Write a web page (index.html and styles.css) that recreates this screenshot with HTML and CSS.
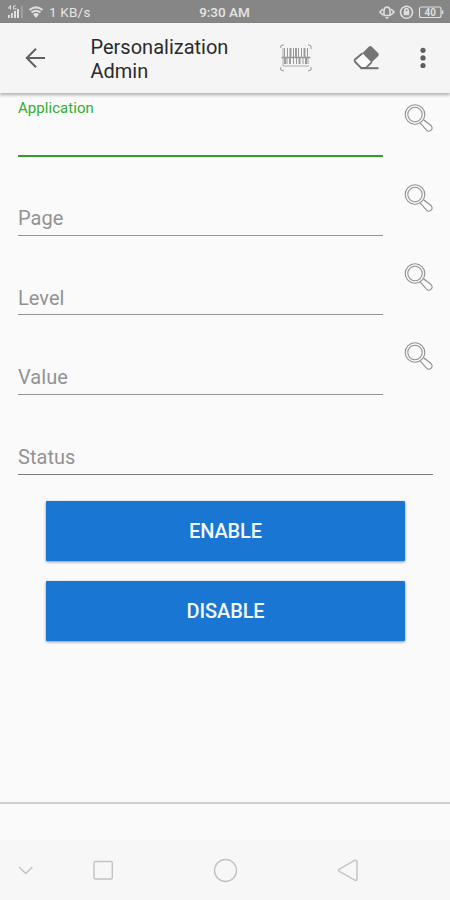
FILE: index.html
```html
<!DOCTYPE html>
<html lang="en">
<head>
<meta charset="utf-8">
<title>Personalization Admin</title>
<link rel="stylesheet" href="styles.css">
</head>
<body>
<svg class="defs" width="0" height="0" aria-hidden="true">
  <symbol id="search" viewBox="0 0 30 30">
    <g fill="none" stroke="#909090" stroke-width="1.100">
      <circle cx="12" cy="11.500" r="9.800"/>
      <circle cx="12" cy="11.500" r="7.200"/>
      <path d="M17.300 20.200L23.500 27.200C26.500 30 30.500 26.300 28.500 23.200C27 21.200 24 19.500 20.500 16.700"/>
    </g>
  </symbol>
</svg>
<div class="screen">
  <div class="status-bar">
    <div class="status-left">
      <svg width="38" height="16" viewBox="0 0 38 16">
        <g fill="#e2e2e2">
          <path d="M1.500 3.500l2-2v4M.8 4h3.500M9 2H6.500v3h2.500V3.800" fill="none" stroke="#d8d8d8"/>
          <rect x="1" y="11" width="1.800" height="3"/>
          <rect x="4" y="9" width="1.800" height="5"/>
          <rect x="7" y="7" width="2" height="7"/>
          <rect x="10" y="5" width="2" height="9"/>
          <rect x="14.500" y="2" width="1" height="12" opacity=".6"/>
        </g>
        <g fill="none" stroke="#dcdcdc" stroke-width="2">
          <path d="M22.500 6Q29 0.700 35.500 6M24.500 8.500Q29 5 33.500 8.500"/>
          <path d="M26 10.200Q29 8 32 10.200L29 14z" fill="#e2e2e2" stroke="none"/>
        </g>
      </svg>
      <span class="rate">1 KB/s</span>
    </div>
    <span class="clock">9:30 AM</span>
    <svg class="status-right" width="66" height="16" viewBox="0 0 66 16">
      <g fill="none" stroke="#dedede" stroke-width="1.600">
        <path d="M4 5L1 8l3 3M12 5L15 8l-3 3"/>
        <path d="M5 11.500V6.500Q5.500 3 8 3t3 3.500v5z"/>
        <path d="M6.500 13.800h3"/>
        <circle cx="27.500" cy="8.300" r="6"/>
        <path d="M25.800 7V6.300a1.700 1.700 0 0 1 3.400 0V7"/>
        <rect x="24.700" y="7" width="5.600" height="4.200" fill="#dedede" stroke="none"/>
        <rect x="40.500" y="3" width="21.500" height="10.500" rx="2" stroke-width="1.200"/>
        <path d="M63.500 6.500v3.500"/>
      </g>
      <text class="battery" x="51.300" y="12" text-anchor="middle">40</text>
    </svg>
  </div>
  <header class="app-bar">
    <svg class="back" width="22" height="22" viewBox="0 0 22 22"><path d="M20 11H2M11 1.700L1.800 11L11 20.300" fill="none" stroke="#606060" stroke-width="2"/></svg>
    <h1 class="title">Personalization<br>Admin</h1>
    <div class="actions">
      <svg width="32" height="28" viewBox="0 0 32 28">
        <g fill="none" stroke="#999" stroke-width="1">
          <path d="M.8 4V1.800L4 .8M28 .8l3 1V5M.8 23v3l3.200 1M28 27l3-1v-3"/>
          <path d="M1.500 13.500h29" stroke-width="1.500"/>
          <path d="M3 4v18M3 22h26" stroke="#aaa"/>
          <path d="M4.500 4v9M7.500 4v9M13.500 4v9M18.500 4v9M21.500 4v9M27.500 4v9M7 14v6M13.500 14v6M16.500 14v6M23 14v6M28 14v6"/>
          <path d="M10.500 4v9M16 4v9M24.500 4v9M5 14v6M10 14v6M19.500 14v6M26 14v6" stroke-width="1.900"/>
        </g>
      </svg>
      <svg class="eraser" width="28" height="26" viewBox="0 0 28 26">
        <path d="M9 8.500L16 1.600Q17.300 .6 18.600 1.600L25.300 8.300Q26.300 9.600 25.300 11L18.400 17.600z" fill="#747474"/>
        <path d="M9.500 8.200L2.300 14.200Q.9 15.600 2.300 17L8 22.800H13L18.400 17.400z" fill="#fafafa"/>
        <path d="M9.500 8.200L2.300 14.200Q.9 15.600 2.300 17L8 22.800H13L18.700 17.100" fill="none" stroke="#707070" stroke-width="1.800"/>
        <path d="M7.500 23.200H25.500" stroke="#707070" stroke-width="2"/>
      </svg>
      <svg class="more" width="6" height="22" viewBox="0 0 6 22" fill="#5f5f5f"><circle cx="3" cy="3.300" r="2.600"/><circle cx="3" cy="10.900" r="2.600"/><circle cx="3" cy="18.500" r="2.600"/></svg>
    </div>
  </header>
  <main class="form">
    <div class="row first">
      <div class="field active"><label>Application</label></div>
      <svg class="search" width="30" height="30"><use href="#search"/></svg>
    </div>
    <div class="row second">
      <div class="field"><label>Page</label></div>
      <svg class="search" width="30" height="30"><use href="#search"/></svg>
    </div>
    <div class="row">
      <div class="field"><label>Level</label></div>
      <svg class="search" width="30" height="30"><use href="#search"/></svg>
    </div>
    <div class="row">
      <div class="field"><label>Value</label></div>
      <svg class="search" width="30" height="30"><use href="#search"/></svg>
    </div>
    <div class="row last">
      <div class="field dark"><label>Status</label></div>
    </div>
    <div class="buttons">
      <button class="button">ENABLE</button>
      <button class="button">DISABLE</button>
    </div>
  </main>
  <div class="footer"></div>
  <nav class="nav-bar">
    <svg width="450" height="60" viewBox="0 0 450 60" fill="none" stroke="#c2c2c2" stroke-width="1.400">
      <path d="M19 27l6.800 6.500L32.300 27"/>
      <rect x="94" y="21.500" width="18.300" height="17.500" rx="1.500"/>
      <circle cx="225.500" cy="30.500" r="11"/>
      <path d="M339 29.300L354.500 20.500Q357 19.800 357 21.500V39Q357 41.200 354.500 40L339 31.200Q337.700 30.200 339 29.300z"/>
    </svg>
  </nav>
</div>
</body>
</html>
```
FILE: styles.css
```css
* { box-sizing: border-box; }
body { margin: 0; font-family: Roboto, "Liberation Sans", sans-serif; background: #fafafa; }
svg { display: block; flex: none; }
.defs { position: absolute; }
.screen { width: 450px; height: 900px; display: flex; flex-direction: column; background: #fafafa; }
.status-bar {
  height: 23px; flex: none; padding: 0 5px 0 7px;
  display: grid; grid-template-columns: 1fr auto 1fr; align-items: center;
  background: #868686; color: #e4e4e4;
}
.status-left { display: flex; align-items: center; gap: 4px; }
.rate { font-size: 13.500px; line-height: 22px; letter-spacing: .2px; }
.clock { font-size: 13.500px; font-weight: 500; line-height: 22px; padding-top: 1px; margin-right: 3px; }
.status-right { justify-self: end; }
.battery { font-size: 10px; font-weight: 700; fill: #dedede; }
.app-bar {
  height: 70px; flex: none; display: flex; align-items: center;
  padding: 0 24px 0 25px; background: #f5f5f5;
  box-shadow: 0 2px 3px rgba(0, 0, 0, .3);
}
.title {
  margin: 3px 0 0 43.500px; font-size: 20px; font-weight: 400; line-height: 23.500px;
  color: #2b2b2b;
}
.actions { margin-left: auto; display: flex; align-items: center; }
.eraser { margin-left: 41px; }
.more { margin-left: 39px; }
.form { flex: 1; padding: 0 17px 0 18px; }
.row { height: 79.500px; display: flex; justify-content: space-between; }
.row.first { height: 64px; }
.row.second { height: 78.900px; }
.row.last { height: 80.100px; }
.field {
  flex: 1; display: flex; align-items: flex-end; padding-bottom: 4.500px;
  border-bottom: 1px solid #949494; color: #929292;
  font-size: 20px; line-height: 24px; letter-spacing: .05px;
}
.field.dark { border-color: #7c7c7c; padding-bottom: 5px; }
.field.active {
  align-items: flex-start; padding-top: 5px; border-bottom: 2px solid #2f9e2f;
  color: #2fae2f; font-size: 15px; line-height: 20px; letter-spacing: .05px;
}
.search { margin: 26px 0 0 20px; }
.first .search { margin-top: 10px; }
.buttons { display: flex; flex-direction: column; gap: 20px; padding: 26px 10px 0 10px; margin: 0 18px; }
.button {
  height: 60px; padding: 1px 0 0; border: 0; border-radius: 1px; background: #1976d2; color: #f4f8ff;
  font: 500 20px/24px Roboto, "Liberation Sans", sans-serif; letter-spacing: -.1px;
  box-shadow: 0 1px 3px rgba(0, 0, 0, .45);
}
.footer { height: 38px; flex: none; border-top: 2px solid #cfcfcf; }
.nav-bar { height: 60px; flex: none; background: #f7f7f7; }
```
